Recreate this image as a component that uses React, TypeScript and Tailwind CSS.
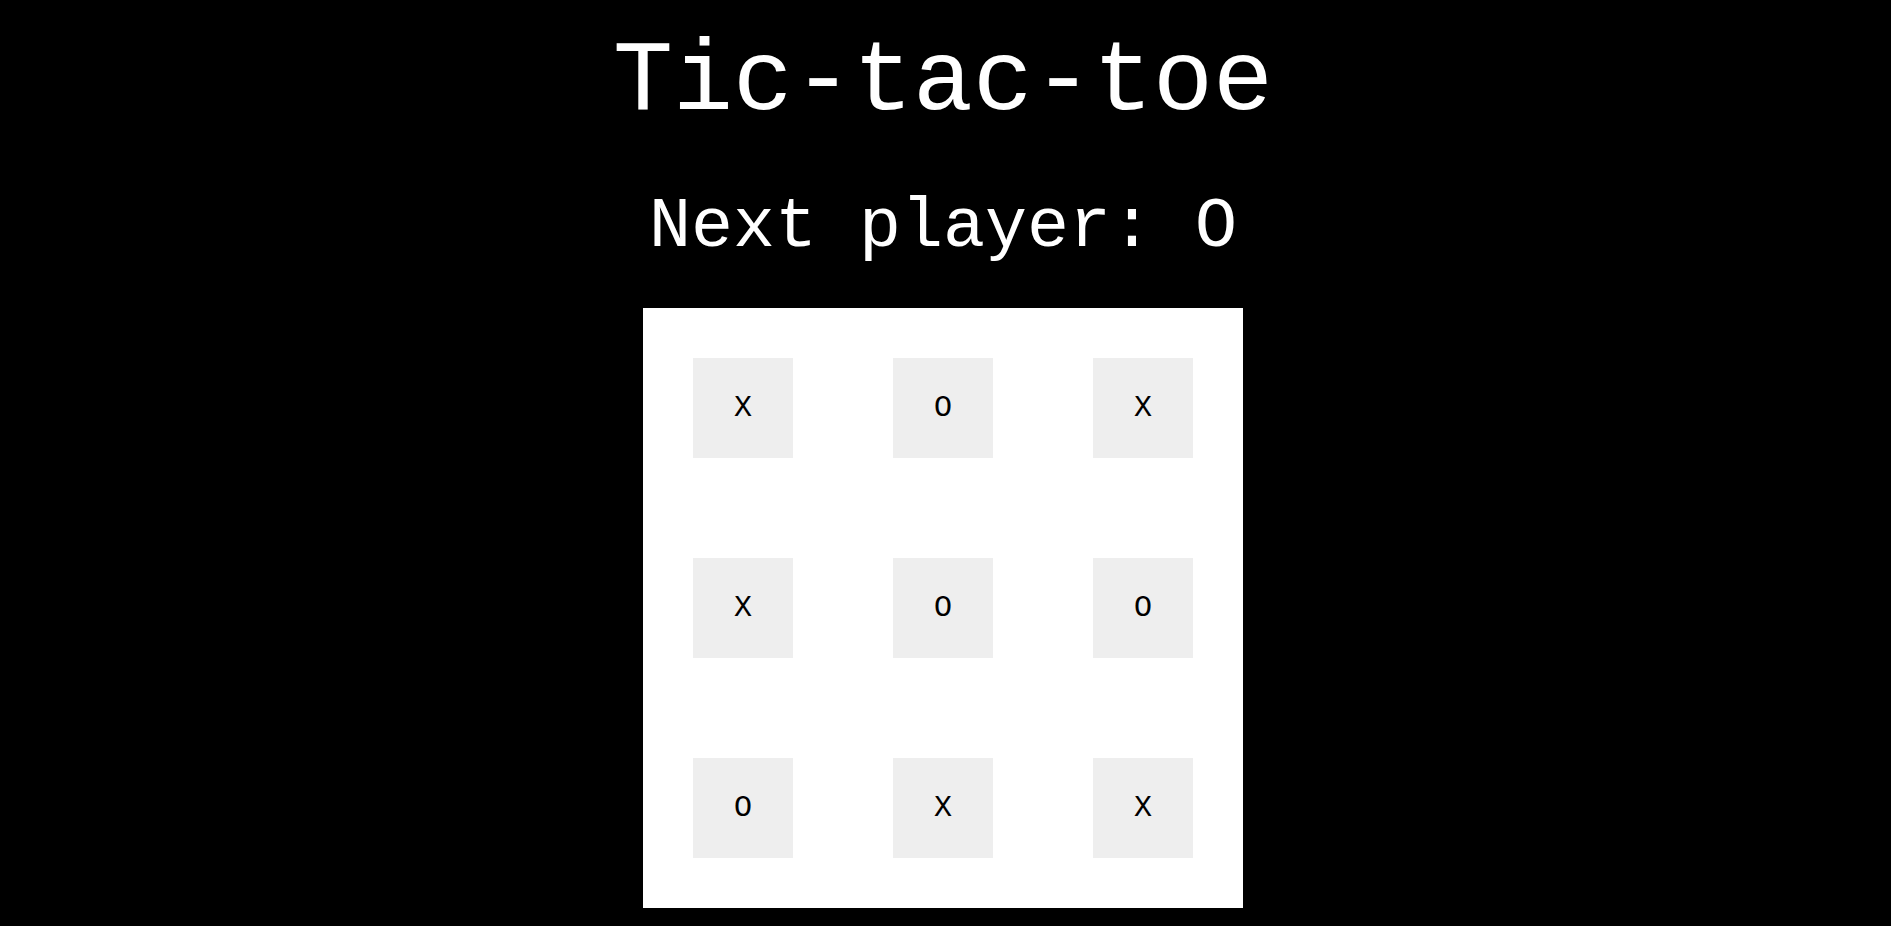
import React from "react";

const board = ["X", "O", "X", "X", "O", "O", "O", "X", "X"];

function Square({ value }: { value: string }) {
    return (
        <button className="flex h-[100px] w-[100px] items-center justify-center bg-[#eeeeee] text-[30px] text-black">
            {value}
        </button>
    );
}

export default function App() {
    return (
        <div className="min-h-[926px] bg-black font-['Liberation_Mono',monospace] text-white">
            <div className="flex flex-col items-center pr-[5px] pt-[26px]">
                <h1 className="text-[100px] leading-[113px]">Tic-tac-toe</h1>
                <p className="mt-[49px] text-[70px] leading-[79px]">Next player: O</p>
                <div className="mt-[41px] grid grid-cols-3 gap-[100px] bg-white p-[50px]">
                    {board.map((v, i) => (
                        <Square key={i} value={v} />
                    ))}
                </div>
            </div>
        </div>
    );
}
